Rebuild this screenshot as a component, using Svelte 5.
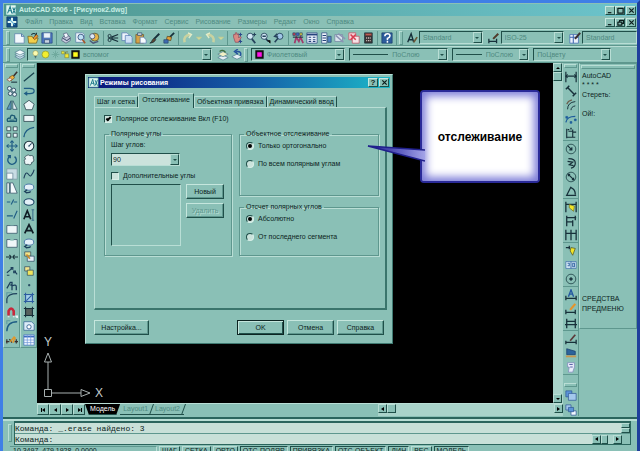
<script lang="ts">
    type Item = string;

    // every glyph is drawn on a 14x14 grid
    const line = (d: string, c = "#17303a", w = 1.2) =>
        `<path d="${d}" fill="none" stroke="${c}" stroke-width="${w}"/>`;
    const fill = (d: string, c: string, s = "#2c4a6c") =>
        `<path d="${d}" fill="${c}" stroke="${s}" stroke-width=".8"/>`;

    const icons: Record<string, string> = {
        app: fill("M1 1h12v12H1z", "#dff6f0", "#2f8c88") + line("M3 11L6 3l2 8M4 8h4M9 4l3 7M12 4L9 11", "#1c7a8a"),
        doc: fill("M1 1h12v12H1z", "#124f86", "#0b3560") + line("M7 2v10M2 7h10", "#dff6f0", 2.4) + line("M4 4l6 6", "#5fb0d8"),
        new: fill("M2 2h8l3 3v8H2z", "#f2f8fc", "#5379a6") + line("M10 2v3h3", "#5379a6"),
        open: fill("M1 5h5l1 2h6l-2 6H2z", "#f2cf4c", "#6b5a1c") + line("M5 3q4-3 6 1l-2 0M11 4V1", "#17303a") + fill("M7 7l4-4 2 2-4 4z", "#e8922c", "#7a4a1c"),
        save: fill("M1 1h12v12H1z", "#4e78c4", "#24427c") + fill("M3 1h8v6H3z", "#eaf2fa", "#5379a6") + fill("M4 9h6v4H4z", "#c9d4e2"),
        plot: fill("M3 6l5-3 4 3v4l-5 3-5-3z", "#c9cfe0", "#4c5878") + fill("M4 2l4-1 2 4-4 2z", "#f4f8ff", "#4c5878") + line("M3 7l5 3 4-3", "#4c5878"),
        preview: fill("M2 1h8l2 2v9H2z", "#eef4fb", "#5379a6") + '<circle cx="8" cy="6" r="3.4" fill="#bfe0f4" stroke="#33507c"/>' + line("M10 9l3 4", "#a35a2c", 2),
        publish: '<circle cx="8" cy="6" r="4.6" fill="#e6b448" stroke="#5b5b3a"/>' + '<circle cx="5" cy="5" r="3" fill="#dfe8f4" stroke="#4c5878"/>' + line("M2 10l4 3 6-2", "#4c5878", 1.6),
        cut: line("M1 7h12M5 6l8-3M5 8l8 3", "#17303a", 1.3) + '<circle cx="3" cy="4.6" r="1.8" fill="none" stroke="#17303a"/><circle cx="3" cy="9.4" r="1.8" fill="none" stroke="#17303a"/>',
        copy: fill("M1 1h6l2 2v7H1z", "#eef4fb", "#4d74b0") + fill("M5 4h6l2 2v7H5z", "#cfe0f6", "#4d74b0"),
        paste: fill("M1 3h9v10H1z", "#d7a348", "#6d5426") + fill("M3 1h5v3H3z", "#cdd4dc") + fill("M6 6h4l3 3v4H6z", "#f6fafd", "#4d74b0"),
        brush: line("M12 2L6 8", "#17303a", 2.2) + fill("M6 7l2 2q-2 4-7 4 2-1 3-4z", "#5b4632", "#17303a"),
        block: line("M8 6l5-5", "#17303a", 2) + fill("M5 5l5 1-1 4-5-1z", "#e4a13a", "#503a16") + fill("M1 9h5v4H1z", "#3f6cb2"),
        undo: line("M3 12q-2-8 7-9", "#c9d2a0", 3) + line("M7 1l4 2-3 4", "#e4ecc8", 1.6),
        redo: line("M11 12q2-8-7-9", "#c9d2a0", 3) + line("M7 1L3 3l3 4", "#e4ecc8", 1.6),
        more: fill("M4 6h6l-3 3z", "#d4dc9c", "#c4cc8c"),
        pan: fill("M3 6V3l2 0 0-2 2 0 0 2 2-1v5l2-2 1 1-3 6H5z", "#d98a84", "#8c4a5a") + line("M11 1v4M9 3h4M11 9v4M9 11h4", "#2c4a8c"),
        zoom: '<circle cx="6" cy="5" r="3.6" fill="#cfe6f2" stroke="#26435c"/>' + line("M8 8l4 5", "#26435c", 2) + line("M11 1v4M9 3h4", "#26435c"),
        zoomwin: '<circle cx="6" cy="5" r="3.6" fill="#cfe6f2" stroke="#26435c"/>' + line("M4 5h4M8 8l3 3", "#26435c", 1.8) + fill("M10 10h3v3z", "#111", "#111"),
        zoomprev: '<circle cx="8" cy="5" r="3.6" fill="#9fc6e6" stroke="#26435c"/>' + line("M6 7l-4 5M5 2L2 5l4 1", "#26435c", 1.8),
        props: fill("M1 1h3v3H1z", "#c83c4c") + fill("M5 1h3v3H5z", "#3c64c8") + fill("M9 1h3v3H9z", "#d8c83c") + line("M3 13L5 6l3 5 2-5 3 7", "#a33a6c", 2) + line("M1 6h12", "#17303a"),
        center: fill("M1 1h12v12H1z", "#e6eefa", "#26437c") + line("M1 3h12", "#26437c", 2) + line("M3 6h3M8 6h3M3 9h3M8 9h3M3 11h3M8 11h3", "#26437c"),
        palette: fill("M2 1h6v12H2z", "#eef4fb", "#26437c") + line("M3 4h4M3 7h4M3 10h4", "#26437c") + fill("M9 5h4v7H9z", "#5384c4"),
        sheet: fill("M1 3h9v8H1z", "#dbe6ee", "#6c7c9c") + line("M2 4l9 8M5 2l8 6", "#8c94b4", 1.8),
        markup: fill("M1 1h8v8H1z", "#f4d4dc", "#c8465c") + fill("M5 5h8v8H5z", "#f6e4e8", "#c8465c") + line("M3 3l6 6M9 3L3 9", "#d83c50", 1.8),
        calc: fill("M3 1h9v12H3z", "#3a3434", "#17303a") + fill("M4 2h7v2H4z", "#c86c5c", "#7a3a3a") + line("M5 7h1M7 7h1M9 7h1M5 10h1M7 10h1M9 10h1", "#e8d8d8", 1.6),
        help: fill("M1 1h12v12H1z", "#2c5c9c", "#173a68") + line("M4.500 5q0-3 3-3 3 0 3 2.500 0 2-3 3v2M7.500 10.500v2", "#fff", 1.8),
        textstyle: line("M2 12L6 2l3 10M3 9h5", "#17303a", 1.6) + line("M13 6l-4 6", "#6b5a3a", 2),
        dimstyle: line("M1 8v5M1 11h9M10 8v5", "#17303a", 1.5) + line("M12 2L6 8", "#503a2a", 2.4),
        tabstyle: fill("M1 3h10v10H1z", "#eaf0fa", "#3c64b0") + line("M1 6h10M5 3v10", "#3c64b0") + line("M13 1L7 8", "#3a3030", 2.4),
        layers: fill("M1 9l6-3 6 3-6 3z", "#c4dce8", "#517c90") + fill("M1 6.500l6-3 6 3-6 3z", "#dcecf4", "#517c90") + fill("M1 4l6-3 6 3-6 3z", "#f2fafc", "#517c90"),
        bulb: '<circle cx="7" cy="5" r="4" fill="#fdfbb0" stroke="#98984c" stroke-width=".8"/>' + line("M5.500 10h3M6 12h2", "#3c5c5c", 1.4),
        sun: '<circle cx="7" cy="7" r="5.400" fill="#f2ee30" stroke="#86902c"/>',
        freeze: line("M3 3l8 8M11 3l-8 8M7 1v12M1 7h12", "#6ea89c", 1.4),
        lock: fill("M1 2h4v4H1z", "#f4f03c", "#76762a") + fill("M6 6h6v6H6z", "#f2e834", "#76762a") + line("M7 6V3h4", "#76762a"),
        yellow: line("M2 2h10v10H2z", "#111", 3) + fill("M3 3h8v8H3z", "#fffb1e", "#111"),
        magenta: line("M2 2h10v10H2z", "#111", 3) + fill("M3 3h8v8H3z", "#ff12e8", "#111"),
        layerprev: fill("M1 10l6-3 6 3-6 3z", "#e4eef4", "#517c90") + fill("M1 6l6-3 6 3-6 3z", "#f2f0c4", "#517c90") + line("M3 3q4-3 7 1", "#3c6c3c", 1.4),
        layerback: fill("M1 9l6-3 6 3-6 3z", "#e4eef4", "#517c90") + line("M11 8q2-6-5-5M8 0L4 3l4 3", "#24509c", 1.6),
        erase: line("M13 1L8 7", "#3a3030", 1.8) + fill("M4 7l4-2 2 3-4 3z", "#f0b43c", "#785020") + fill("M1 10l4-2 2 2-3 2z", "#f4f0e4", "#8c4a3c") + line("M6 13h7", "#17303a"),
        copyobj: [[4, 4], [9, 6], [5, 10], [10, 11]].map(([x, y]) => `<circle cx="${x}" cy="${y}" r="2.300" fill="#e6f2f6" stroke="#26435c"/>`).join(""),
        mirror: fill("M6 2v10H1z", "#5e9cc0", "#1e4058") + fill("M8 2v10h5z", "#e6f2f6", "#1e4058"),
        offset: line("M2 11q-2-4 3-4 0-4 3-3 3 0 2 3 3 0 2 4z", "#1e5c74", 1.6) + line("M4 9.500h6", "#1e5c74", 1.2),
        array: fill("M1 1h4.500v4.500H1z", "#e6f2f6", "#17303a") + fill("M8.500 1H13v4.500H8.500z", "#e6f2f6", "#17303a") + fill("M1 8.500h4.500V13H1z", "#e6f2f6", "#17303a") + fill("M8.500 8.500H13V13H8.500z", "#e6f2f6", "#17303a"),
        move: line("M7 1v12M1 7h12", "#1e5c84", 1.4) + line("M5 3l2-2 2 2M5 11l2 2 2-2M3 5L1 7l2 2M11 5l2 2-2 2", "#1e5c84"),
        rotate: line("M5 2.500A5 5 0 1 0 10 3M2 2l3 0 0 3", "#1e5c84", 1.6),
        scale: fill("M1 1h12v12H1z", "#c8dce4", "#7c98a4") + fill("M1 6h7v7H1z", "#f4fafc", "#5c7c90"),
        stretch: fill("M1 1h3v12H1z", "#e6f2f6", "#26435c") + fill("M5 1l3 0 5 12H5z", "#f4fafc", "#26435c"),
        trim: line("M1 7h4M6 10l3-6M9 7h4", "#1e5c84", 1.3),
        extend: line("M1 8h7M9 11l4-9", "#1e5c84", 1.3),
        breakpt: fill("M1 3h12v9H1z", "#eef6f8", "#26435c") + line("M5 2h4", "#8ac0b6", 1.6),
        brk: fill("M1 3h12v9H1z", "#eef6f8", "#26435c") + line("M5 3h4", "#8ac0b6", 2.4),
        join: line("M0 7h5M9 7h5M4 4.500L6 7 4 9.500M10 4.500L8 7l2 2.500", "#17303a", 1.3),
        chamfer: line("M1 9l6-5M6 3h2v2H6zM10 7l3 4M9 7h2v2H9zM1 12h3", "#1e405c", 1.3),
        fillet: line("M1 11l4-7h2v3H5M7 13V8q5-2 5 1v4", "#1e405c", 1.5),
        arcin: line("M1 13V8q1-6 12-6", "#1e405c", 1.4) + line("M1 6V1h6", "#5c98a0"),
        magnet: line("M3 11V6q3-6 6 0v5", "#c8283c", 3) + line("M3 12v1M9 12v1M11 12h2v2", "#f0f4f8", 2),
        arcb: line("M1 13q0-11 12-11", "#1e5c84", 1.6) + line("M1 5V1h4", "#5c98a0"),
        explode: line("M0 9h4M4 6l3 4M10 9h4M12 6v5M1 6v5", "#3a3030", 1.4) + line("M5 9l5-6M8 10l3-6", "#e0982c", 1.8),
        line: line("M1 12L13 2", "#17404c", 1.4),
        pline: line("M1 4h7q5 0 5 3t-5 3H3M5 8L2 10l3 2", "#1e5c84", 1.4),
        polygon: fill("M7 1.500l6 4.500-2.300 6.500H3.300L1 6z", "#eef6f8", "#17303a"),
        rect: fill("M1 4h12v7H1z", "#eef6f8", "#17303a"),
        arc: line("M1 13Q2 3 13 1.500", "#1e5c84", 1.5),
        circle: '<circle cx="7" cy="7" r="5.600" fill="#eef6f8" stroke="#17303a" stroke-width="1.200"/>' + line("M7 7l3-3M6 7h2", "#1e405c"),
        cloud: fill("M3 6q-3-3 1-4 2-2 4 0 5-1 4 3 2 4-2 5 0 4-4 2-5 1-4-3-2-2 1-3z", "#eef6f8", "#17303a"),
        spline: line("M1 12q2-9 5-5t4 1q2-2 3-6", "#1e405c", 1.3),
        ellarc: '<ellipse cx="7" cy="6" rx="5.500" ry="3.600" fill="#e4f0f8" stroke="#3c6ca0"/>' + line("M3 12q4 1 6-1M5 9l-3 2 3 2", "#1e405c", 1.5),
        ellipse: '<ellipse cx="7" cy="7" rx="5.800" ry="3.800" fill="#e4f0f8" stroke="#1e4868" stroke-width="1.300"/>',
        insert: fill("M2 1h7v5H2z", "#f2e48c", "#26435c") + fill("M5 6h8v6H5z", "#e6eef8", "#26435c") + line("M4 4l4 5", "#c88c2c", 2),
        mkblock: fill("M2 2h6v5H2z", "#f2e48c", "#26435c") + fill("M5 6h7v6H5z", "#f0e45c", "#26435c"),
        mtext: line("M1 12L5 2l4 10M2.500 9h5", "#101c24", 1.9) + line("M10 1h3M10 13h3M11.500 1v12", "#3a6c8c"),
        bigA: line("M2 12L7 2l5 10M4 9h6", "#101c24", 2),
        point: fill("M6.500 6.500h1.500V8H6.500z", "#1e405c", "#1e405c"),
        hatch: fill("M3 3h8v8H3z", "#a4cfe8", "#2c5ca0") + line("M1 3h12M1 11h12M3 1v12M11 1v12M4 10l6-6", "#2c5ca0"),
        gradient: fill("M3 3h8v8H3z", "#56605c", "#17303a") + line("M1 3h12M1 11h12M3 1v12M11 1v12", "#17303a"),
        region: fill("M1 2h9l3 3v7H1z", "#dcecf8", "#2c5c90") + '<circle cx="7" cy="8" r="2.500" fill="#fff" stroke="#2c5c90"/>',
        table: fill("M1 1h12v12H1z", "#f2f8ff", "#3c6cc0") + line("M1 3h12", "#3c6cc0", 2) + line("M5 1v12M9 1v12M1 7h12M1 10h12", "#6c94d8", .8),
        dlin: line("M1 1v12M13 1v12M1 6h12", "#17303a", 1.4) + line("M3 4L1 6l2 2M11 4l2 2-2 2", "#17303a"),
        dali: line("M3 3l8 8M1 5l4-4M9 13l4-4", "#17303a", 1.7),
        darc: line("M3 12q0-8 9-9M7 13q0-4 5-5", "#17303a", 1.1) + line("M2 6l2-3 4-2", "#6c5c4c", 1.4),
        dord: line("M1 11q1-7 11-7", "#1e5c9c", 1.5) + fill("M1 4h2v2H1zM6 10h2v2H6zM11 7h2v2h-2z", "#1e5c9c", "#1e5c9c"),
        djog: line("M2 2v11M2 12h10M4 5h5v7M9 3v3h4", "#17303a", 1.3) + line("M3 3h2M7 1v2", "#17303a", 1.6),
        drad: '<circle cx="7" cy="7" r="5.600" fill="none" stroke="#24484c"/>' + line("M3 3l5 5M8 5v3H5", "#17303a", 1.3),
        djogr: line("M4 2q8 0 8 5t-5 6M3 5l6 1-4 3 5 1", "#17303a", 1.4),
        ddia: '<circle cx="7" cy="7" r="5.600" fill="none" stroke="#24484c"/>' + line("M3 3l8 8M4 6V4h2M10 8v2H8", "#17303a", 1.4),
        dang: line("M7 2L2 12h11M7 3q5 2 5 8", "#17303a", 1.5),
        dquick: line("M1 1v12M13 1v12M1 4h12", "#17303a", 1.5) + fill("M5 4l6 2-1 6-5-4z", "#f0e428", "#6c6c1c"),
        dbase: line("M2 1v12M2 3h11M2 8h7M9 6v7M12 1v5", "#17303a", 1.5),
        dcont: line("M1 1v12M7 1v12M13 1v12M1 5h12", "#17303a", 1.5),
        dlead: line("M1 3h5M5 1v4", "#17303a", 1.4) + fill("M7 3l5 1-3 8-3-5z", "#f0e428", "#4c4c1c"),
        dtol: fill("M1 3h12v8H1z", "#d4e8f4", "#3c6ca8") + line("M7 3v8M3 5h2v3H3M9 5h2v4H9z", "#3c6ca8"),
        dcen: '<circle cx="7" cy="7" r="5.600" fill="none" stroke="#24484c"/>' + line("M7 5v4M5 7h4", "#17303a", 1.6),
        dtxt: line("M1 8v5M13 8v5M1 11h12", "#17303a", 1.5) + line("M4 9l3-8 3 8M5 6h4", "#2458a0", 1.6),
        dpen: line("M1 8v5M12 8v5M1 11h11", "#17303a", 1.5) + line("M12 1L6 8", "#e4942c", 2.6),
        dupd: line("M2 2v11M12 2v11M2 5h10M0 9h14", "#17303a", 1.5),
        dred: line("M1 9v4M13 8v5M1 11h12", "#17303a", 1.5) + line("M12 2L6 9", "#5c3a3a", 2),
        dblu: fill("M2 2l10 3v4H2z", "#2c649c", "#173a68") + line("M1 11h12", "#c89850", 2),
        dscr: fill("M3 2h8v5l-2 6H4l1-6H3z", "#e8ecfa", "#7c84b8") + line("M5 4h4M6 7h3", "#5c64a8"),
        ord1: fill("M1 1h7v7H1z", "#5c94d8", "#2c5494") + fill("M4 4h9v8H4z", "#a4c8ec", "#2c5494"),
        ord2: fill("M1 1h6v6H1z", "#a4c8ec", "#2c5494") + fill("M7 8h6v5H7z", "#f2f8ff", "#2c5494") + fill("M4 4h6v5H4z", "#5c94d8", "#2c5494"),
    };

    const maximize = "M1 1.500h6M1 1v6h6V1";
    const restore = "M3 1.500h4.500M3 1v2M7.500 1v4H6M1 3.500h4.500M1 3v4h4.500V3";

    const menu = ["Файл", "Правка", "Вид", "Вставка", "Формат", "Сервис", "Рисование", "Размеры", "Редакт", "Окно", "Справка"];
    const standard: Item[][] = [
        ["new", "open", "save"],
        ["plot", "preview", "publish"],
        ["cut", "copy", "paste", "brush", "block"],
        ["undo", "more", "redo", "more"],
        ["pan", "zoom", "zoomwin", "zoomprev"],
        ["props", "center", "palette", "sheet", "markup", "calc"],
        ["help"],
    ];
    const modify: Item[] = ["erase", "copyobj", "mirror", "offset", "array", "move", "rotate", "scale", "stretch", "trim", "extend", "breakpt", "brk", "join", "chamfer", "fillet", "arcin", "magnet", "arcb", "explode"];
    const draw: Item[] = ["line", "pline", "polygon", "rect", "arc", "circle", "cloud", "spline", "ellarc", "ellipse", "mtext", "bigA", "ellarc", "insert", "mkblock", "point", "hatch", "gradient", "region", "table"];
    const dims: Item[][] = [
        ["dlin", "dali", "darc", "dord", "djog"],
        ["drad", "djogr", "ddia", "dang"],
        ["dquick", "dbase", "dcont"],
        ["dlead", "dtol", "dcen"],
        ["dtxt", "dpen", "dupd"],
        ["dred", "dblu", "dscr"],
    ];
    const tabs = ["Шаг и сетка", "Отслеживание", "Объектная привязка", "Динамический ввод"];

    let active = $state(1);
    let polar = $state(true);
    let extra = $state(false);
    let tracking = $state("ortho");
    let measure = $state("abs");
    let command = $state("");
</script>

{#snippet icon(name: string)}
    <svg class="icon" viewBox="0 0 14 14" aria-hidden="true">{@html icons[name]}</svg>
{/snippet}

{#snippet combo(cls: string, label: string, value: string, lead: string[])}
    <div class="combo {cls}">
        {#each lead as name}
            {#if name === "rule"}
                <span class="rule"></span>
            {:else}
                {@render icon(name)}
            {/if}
        {/each}
        <select aria-label={label}><option>{value}</option></select>
        <span class="drop"></span>
    </div>
{/snippet}

{#snippet winButtons(middle: string)}
    <div class="winbtns">
        <button aria-label="Свернуть"><svg viewBox="0 0 8 8"><path d="M1 6.500h4" /></svg></button>
        <button aria-label="Развернуть"><svg viewBox="0 0 8 8"><path d={middle} /></svg></button>
        <button class="apart" aria-label="Закрыть"><svg viewBox="0 0 8 8"><path d="M1.500 1.500l5 5M6.500 1.500l-5 5" /></svg></button>
    </div>
{/snippet}

<div class="app">
    <header class="titlebar">
        {@render icon("app")}
        <h1>AutoCAD 2006 - [Рисунок2.dwg]</h1>
        {@render winButtons(maximize)}
    </header>

    <nav class="menubar">
        {@render icon("doc")}
        {#each menu as item}
            <button>{item}</button>
        {/each}
        {@render winButtons(restore)}
    </nav>

    <div class="toolbar">
        <span class="grip"></span>
        {#each standard as group}
            <div class="group">
                {#each group as name}
                    <button class="tool" class:slim={name === "more"} aria-label={name}>{@render icon(name)}</button>
                {/each}
            </div>
        {/each}
        <span class="grip"></span>
        <button class="tool" aria-label="textstyle">{@render icon("textstyle")}</button>
        {@render combo("w6", "Стиль текста", "Standard", [])}
        <button class="tool" aria-label="dimstyle">{@render icon("dimstyle")}</button>
        {@render combo("w6", "Размерный стиль", "ISO-25", [])}
        <button class="tool" aria-label="tabstyle">{@render icon("tabstyle")}</button>
        {@render combo("w5 open", "Стиль таблицы", "Standard", [])}
    </div>

    <div class="toolbar second">
        <span class="grip"></span>
        <button class="tool" aria-label="layers">{@render icon("layers")}</button>
        {@render combo("w19", "Слой", "вспомог", ["bulb", "sun", "freeze", "lock", "yellow"])}
        <button class="tool" aria-label="layerprev">{@render icon("layerprev")}</button>
        <button class="tool" aria-label="layerback">{@render icon("layerback")}</button>
        <span class="grip"></span>
        {@render combo("w9", "Цвет", "Фиолетовый", ["magenta"])}
        {@render combo("w10", "Тип линии", "ПоСлою", ["rule"])}
        {@render combo("w8", "Вес линии", "ПоСлою", ["rule"])}
        {@render combo("w8", "Стиль печати", "ПоЦвету", [])}
    </div>

    <main>
        <div class="column left">
            <span class="grip flat"></span>
            {#each modify as name}
                <button class="tool" aria-label={name}>{@render icon(name)}</button>
            {/each}
        </div>
        <div class="column left">
            <span class="grip flat"></span>
            {#each draw as name}
                <button class="tool" aria-label={name}>{@render icon(name)}</button>
            {/each}
        </div>

        <div class="drawing">
            <div class="canvasrow">
                <div class="canvas">
                    <svg class="ucs" viewBox="0 0 64 64">
                        <path d="M4.500 53.500h7v7h-7zM8 53.500V26M4.500 26L8 17l3.500 9zM11.500 57H41M41 53.500l9 3.500-9 3.500z" />
                        <text x="4" y="10">Y</text>
                        <text x="55" y="61">X</text>
                    </svg>
                </div>
                <div class="vscroll">
                    <button class="arrow up" aria-label="Вверх"></button>
                    <span class="thumb"></span>
                    <span class="space"></span>
                    <button class="arrow down" aria-label="Вниз"></button>
                </div>
            </div>
            <div class="sheets">
                <button class="arrow first" aria-label="Первый"></button>
                <button class="arrow prev" aria-label="Назад"></button>
                <button class="arrow next" aria-label="Вперед"></button>
                <button class="arrow last" aria-label="Последний"></button>
                <button class="sheet on">Модель</button>
                <button class="sheet">Layout1</button>
                <button class="sheet">Layout2</button>
                <span class="space"></span>
                <div class="hscroll">
                    <button class="arrow prev" aria-label="Влево"></button>
                    <span class="thumb"></span>
                    <span class="space"></span>
                    <button class="arrow next" aria-label="Вправо"></button>
                </div>
            </div>
        </div>

        <div class="column right">
            <span class="grip flat"></span>
            {#each dims as group}
                <div class="stack">
                    {#each group as name}
                        <button class="tool" aria-label={name}>{@render icon(name)}</button>
                    {/each}
                </div>
            {/each}
            <span class="grip flat lower"></span>
            <button class="tool" aria-label="ord1">{@render icon("ord1")}</button>
            <button class="tool" aria-label="ord2">{@render icon("ord2")}</button>
        </div>

        <aside class="screenmenu">
            <span class="grip flat"></span>
            <a href="#top">AutoCAD</a>
            <a href="#snap" class="stars">* * * *</a>
            <a href="#erase" class="gap">Стереть:</a>
            <a href="#oops" class="gap">Ой!:</a>
            <span class="space"></span>
            <a href="#tools">СРЕДСТВА</a>
            <a href="#last">ПРЕДМЕНЮ</a>
        </aside>

        <div class="dialog" role="dialog" aria-label="Режимы рисования">
            <div class="caption">
                {@render icon("app")}
                <h2>Режимы рисования</h2>
                <div class="winbtns">
                    <button aria-label="Подсказка"><b>?</b></button>
                    <button class="apart" aria-label="Закрыть"><svg viewBox="0 0 8 8"><path d="M1.500 1.500l5 5M6.500 1.500l-5 5" /></svg></button>
                </div>
            </div>
            <div class="tabs">
                {#each tabs as tab, i}
                    <button class="tab" class:active={i === active} onclick={() => (active = i)}>{tab}</button>
                {/each}
            </div>
            <div class="page">
                <label class="row"><input type="checkbox" bind:checked={polar} />Полярное отслеживание Вкл (F10)</label>
                <div class="columns">
                    <fieldset class="angles">
                        <legend>Полярные углы</legend>
                        <label for="step">Шаг углов:</label>
                        <div class="combo angle">
                            <select id="step"><option>90</option></select>
                            <span class="drop"></span>
                        </div>
                        <label class="row"><input type="checkbox" bind:checked={extra} />Дополнительные углы</label>
                        <div class="list">
                            <div class="listbox" role="listbox" aria-label="Дополнительные углы" tabindex="0"></div>
                            <div class="side">
                                <button class="btn">Новый</button>
                                <button class="btn" disabled>Удалить</button>
                            </div>
                        </div>
                    </fieldset>
                    <div class="choices">
                        <fieldset class="tall">
                            <legend>Объектное отслеживание</legend>
                            <label class="row"><input type="radio" value="ortho" bind:group={tracking} />Только ортогонально</label>
                            <label class="row"><input type="radio" value="all" bind:group={tracking} />По всем полярным углам</label>
                        </fieldset>
                        <fieldset>
                            <legend>Отсчет полярных углов</legend>
                            <label class="row"><input type="radio" value="abs" bind:group={measure} />Абсолютно</label>
                            <label class="row"><input type="radio" value="rel" bind:group={measure} />От последнего сегмента</label>
                        </fieldset>
                    </div>
                </div>
            </div>
            <div class="actions">
                <button class="btn wide">Настройка...</button>
                <span class="space"></span>
                <button class="btn default">OK</button>
                <button class="btn">Отмена</button>
                <button class="btn">Справка</button>
            </div>
        </div>

        <div class="callout">
            <svg class="tail" viewBox="0 0 58 18">
                <defs>
                    <linearGradient id="tail" x1="0" x2="1">
                        <stop offset="0" stop-color="#1c1c8c" />
                        <stop offset=".6" stop-color="#6464c4" />
                        <stop offset="1" stop-color="#a4a4e8" />
                    </linearGradient>
                </defs>
                <path d="M58 5L1 1l57 15" fill="url(#tail)" stroke="#20208c" stroke-width="1.500" />
            </svg>
            отслеживание
        </div>
    </main>

    <section class="command">
        <span class="grip"></span>
        <div class="lines">
            <div class="history">
                <output>Команда: _.erase найдено: 3</output>
                <div class="spin"><span></span><span></span></div>
            </div>
            <div class="prompt">
                <label for="cmd">Команда:</label>
                <input id="cmd" type="text" bind:value={command} />
                <div class="hscroll mini">
                    <button class="arrow prev" aria-label="Влево"></button>
                    <span class="thumb"></span>
                    <span class="space"></span>
                    <button class="arrow next" aria-label="Вправо"></button>
                </div>
            </div>
        </div>
    </section>

    <footer>
        <span class="coords">10.3497, 479.1928, 0.0000</span>
        <button>ШАГ</button>
        <button>СЕТКА</button>
        <button>ОРТО</button>
        <button class="in">ОТС-ПОЛЯР</button>
        <button class="in">ПРИВЯЗКА</button>
        <button class="in">ОТС-ОБЪЕКТ</button>
        <button class="in">ДИН</button>
        <button>ВЕС</button>
        <button class="in">МОДЕЛЬ</button>
    </footer>
</div>

<style>
    :global(body) {
        background: #8ac0b6;
    }

    .app {
        --face: #8ac0b6;
        --light: #b9ded5;
        --dark: #1f4f49;
        --mid: #5e978e;
        --dim: #4f8a81;
        height: 100vh;
        display: flex;
        flex-direction: column;
        overflow: hidden;
        box-sizing: border-box;
        border: 3px solid #3f7fe6;
        border-right-color: #1f3f9c;
        border-bottom: 0;
        background: var(--face);
        color: #0c2422;
        font-family: "Liberation Sans", Arial, sans-serif;
        font-size: 7px;
        line-height: 10px;
        white-space: nowrap;
    }

    button,
    select,
    input {
        font: inherit;
        color: inherit;
        margin: 0;
        padding: 0;
        border: 0;
        background: none;
        border-radius: 0;
    }

    h1,
    h2 {
        margin: 0;
        flex: 1;
        font-size: 7px;
    }

    .icon {
        width: 12px;
        height: 12px;
        flex: none;
        display: block;
    }

    .space {
        flex: 1;
    }

    .titlebar {
        display: flex;
        align-items: center;
        gap: 2px;
        height: 12px;
        flex: none;
        margin: 1px 0 0 1px;
        padding: 0 1px;
        background: linear-gradient(90deg, #4f968e, #6cc4cc);
        color: #c8eee6;
    }

    .menubar {
        display: flex;
        align-items: center;
        gap: 7px;
        height: 12px;
        flex: none;
        padding: 0 1px 0 3px;
        color: var(--dim);
        border-bottom: 1px solid var(--mid);
    }

    .winbtns {
        display: flex;
        margin-left: auto;
    }

    .winbtns button {
        width: 10px;
        height: 9px;
        box-sizing: border-box;
        border: 1px solid;
        border-color: #c9e8e0 var(--dark) var(--dark) #c9e8e0;
        background: var(--face);
        display: flex;
        align-items: center;
        justify-content: center;
        font-size: 8px;
        line-height: 7px;
        color: #0c1c1c;
    }

    .winbtns .apart {
        margin-left: 1px;
    }

    .winbtns svg {
        width: 7px;
        height: 7px;
        fill: none;
        stroke: #0c1c1c;
        stroke-width: 1.4;
    }

    .toolbar {
        display: flex;
        align-items: center;
        height: 17px;
        flex: none;
        padding-left: 3px;
        border-top: 1px solid var(--light);
        border-bottom: 1px solid var(--mid);
        box-sizing: border-box;
    }

    .second {
        padding-right: 22px;
    }

    .second .grip {
        margin-right: 3px;
    }

    .grip {
        width: 2px;
        height: 12px;
        flex: none;
        margin-right: 2px;
        border: 1px solid;
        border-color: var(--light) var(--mid) var(--mid) var(--light);
    }

    .grip.flat {
        width: auto;
        height: 2px;
        margin: 1px 1px 2px;
    }

    .grip.lower {
        margin-top: 7px;
    }

    .group {
        display: flex;
        padding-right: 2px;
        margin-right: 2px;
        border-right: 1px solid var(--mid);
    }

    .tool {
        width: 14px;
        height: 14px;
        flex: none;
        display: flex;
        align-items: center;
        justify-content: center;
    }

    .tool.slim {
        width: 8px;
    }

    .combo {
        display: flex;
        align-items: center;
        gap: 1px;
        height: 13px;
        box-sizing: border-box;
        min-width: 0;
        padding-left: 3px;
        margin-right: 4px;
        border: 1px solid;
        border-color: var(--dark) var(--light) var(--light) var(--dark);
        color: var(--dim);
    }

    .combo .icon {
        width: 9px;
        height: 9px;
    }

    .combo .icon + select {
        padding-left: 2px;
    }

    .w5 { flex: 52 1 0; }
    .w6 { flex: 61 1 0; }
    .w8 { flex: 76 1 0; }
    .w9 { flex: 93 1 0; }
    .w10 { flex: 98 1 0; }
    .w19 { flex: 188 1 0; }

    .open {
        margin-right: 0;
    }

    .open .drop {
        display: none;
    }

    .rule {
        flex: 4;
        height: 1px;
        background: var(--dark);
    }

    select {
        appearance: none;
        flex: 5;
        min-width: 0;
        outline: 0;
    }

    .rule + select {
        padding-left: 3px;
    }

    .drop {
        width: 7px;
        align-self: stretch;
        flex: none;
        border: 1px solid;
        border-color: var(--light) var(--dark) var(--dark) var(--light);
        display: flex;
        align-items: center;
        justify-content: center;
        pointer-events: none;
    }

    .drop::before {
        content: "";
        border: 2px solid transparent;
        border-top-color: #1f4f49;
        border-bottom: 0;
    }

    main {
        position: relative;
        flex: 1;
        min-height: 0;
        display: flex;
    }

    .column {
        width: 15px;
        flex: none;
        display: flex;
        flex-direction: column;
        border-right: 1px solid var(--mid);
    }

    .left {
        height: 284px;
        border-left: 1px solid var(--light);
        border-bottom: 1px solid var(--mid);
    }

    .left .tool {
        flex: 1;
        width: 100%;
        min-height: 0;
    }

    .right .tool {
        width: 15px;
        height: 14px;
    }

    .stack {
        margin-bottom: 1px;
        border-bottom: 1px solid var(--mid);
    }

    .drawing {
        flex: 1;
        min-width: 0;
        display: flex;
        flex-direction: column;
    }

    .canvasrow {
        flex: 1;
        min-height: 0;
        display: flex;
    }

    .canvas {
        flex: 1;
        background: #000;
        position: relative;
    }

    .ucs {
        position: absolute;
        left: 3px;
        bottom: 3px;
        width: 64px;
        height: 64px;
        fill: none;
        stroke: #a8b0b0;
    }

    .ucs text {
        fill: #c4cccc;
        stroke: none;
        font-size: 12px;
    }

    .vscroll {
        width: 10px;
        display: flex;
        flex-direction: column;
        background: #a9d3ca;
    }

    .thumb {
        width: 7px;
        height: 7px;
        border: 1px solid;
        border-color: var(--light) var(--dark) var(--dark) var(--light);
        background: var(--face);
    }

    .arrow {
        width: 9px;
        height: 9px;
        flex: none;
        box-sizing: border-box;
        border: 1px solid;
        border-color: var(--light) var(--dark) var(--dark) var(--light);
        background: var(--face);
        display: flex;
        align-items: center;
        justify-content: center;
    }

    .arrow::before {
        content: "";
        border: 2px solid transparent;
    }

    .up::before {
        border-bottom-color: #000;
        border-top: 0;
    }

    .down::before {
        border-top-color: #000;
        border-bottom: 0;
    }

    .prev::before,
    .first::before {
        border-right: 3px solid #000;
        border-left: 0;
    }

    .next::before,
    .last::before {
        border-left: 3px solid #000;
        border-right: 0;
    }

    .first::before {
        box-shadow: -1px 0 #000;
    }

    .last::before {
        box-shadow: 1px 0 #000;
    }

    .sheets {
        display: flex;
        height: 12px;
        flex: none;
        border-top: 1px solid var(--light);
    }

    .sheets > .arrow {
        width: 12px;
        height: 11px;
    }

    .sheet {
        position: relative;
        height: 11px;
        padding: 0 4px 0 3px;
        color: var(--dim);
        border-bottom: 1px solid var(--dark);
    }

    .sheet::after {
        content: "";
        position: absolute;
        top: 0;
        right: 0;
        height: 11px;
        border-right: 1px solid var(--dark);
        transform: skewX(-20deg);
    }

    .sheet.on {
        background: #000;
        color: #fff;
        clip-path: polygon(0 0, 100% 0, calc(100% - 4px) 100%, 4px 100%);
        padding: 0 5px;
    }

    .hscroll {
        display: flex;
        width: 185px;
        background: #a9d3ca;
    }

    .mini {
        width: 30px;
        margin-right: 8px;
    }

    .mini .thumb {
        width: 5px;
    }

    .screenmenu {
        flex: none;
        width: 58px;
        height: 266px;
        display: flex;
        flex-direction: column;
        border: 1px solid var(--mid);
        border-left-color: var(--light);
        box-sizing: border-box;
    }

    .screenmenu a {
        padding-left: 2px;
        color: inherit;
        text-decoration: none;
    }

    .screenmenu .stars {
        line-height: 8px;
    }

    .screenmenu .gap {
        margin-top: 1px;
        margin-bottom: 8px;
    }

    .screenmenu a:last-child {
        margin-bottom: 14px;
    }

    .dialog {
        position: absolute;
        left: 82px;
        top: 11px;
        width: 308px;
        box-sizing: border-box;
        padding: 2px;
        border: 1px solid;
        border-color: var(--light) #3f7a72 #3f7a72 var(--light);
        background: var(--face);
    }

    .caption {
        display: flex;
        align-items: center;
        gap: 1px;
        height: 11px;
        padding: 0 1px 0 0;
        background: linear-gradient(90deg, #0a1478, #1560a8 55%, #1cb8c8);
        color: #fff;
    }

    .caption .icon {
        width: 11px;
        height: 11px;
    }

    .tabs {
        display: flex;
        align-items: flex-end;
        height: 19px;
        padding-left: 6px;
    }

    .tab {
        height: 11px;
        padding: 0 2px;
        border-top: 1px solid var(--light);
        border-left: 1px solid var(--light);
        border-right: 1px solid var(--dark);
    }

    .tab.active {
        height: 15px;
        margin-bottom: -1px;
        padding: 0 3px 3px;
        background: var(--face);
    }

    .page {
        height: 203px;
        box-sizing: border-box;
        margin: 0 3px 0 6px;
        padding: 6px 6px 0 9px;
        border: 1px solid var(--light);
        border-right: 2px solid #3a756c;
        border-bottom: 2px solid #3a756c;
    }

    .row {
        display: flex;
        align-items: center;
        gap: 4px;
    }

    input[type="checkbox"],
    input[type="radio"] {
        appearance: none;
        width: 8px;
        height: 8px;
        flex: none;
        box-sizing: border-box;
        border: 1px solid;
        border-color: var(--dark) #d8efe8 #d8efe8 var(--dark);
        background: #cbe3dc;
        display: flex;
        align-items: center;
        justify-content: center;
    }

    input[type="radio"] {
        border-radius: 50%;
    }

    input[type="radio"]:checked::before {
        content: "";
        width: 4px;
        height: 4px;
        border-radius: 50%;
        background: #000;
    }

    input[type="checkbox"]:checked::before {
        content: "";
        width: 3px;
        height: 1px;
        margin-bottom: 2px;
        border-left: 2px solid #000;
        border-bottom: 2px solid #000;
        transform: rotate(-45deg);
    }

    .columns {
        display: flex;
        gap: 7px;
        margin-top: 5px;
    }

    fieldset {
        min-width: 0;
        margin: 0;
        padding: 1px 6px 0;
        border: 1px solid var(--mid);
        box-shadow: inset 1px 1px var(--light), 1px 1px var(--light);
    }

    legend {
        padding: 0 2px;
        margin-left: -2px;
    }

    .angles {
        width: 128px;
        height: 127px;
        box-sizing: border-box;
    }

    .angle {
        width: 69px;
        height: 13px;
        margin: 3px 0 5px;
        padding-left: 1px;
        background: #cbe3dc;
        color: #0c2422;
    }

    .angle .drop {
        background: var(--face);
    }

    .list {
        display: flex;
        gap: 5px;
        margin-top: 3px;
    }

    .listbox {
        width: 70px;
        height: 62px;
        box-sizing: border-box;
        border: 1px solid;
        border-color: var(--dark) var(--light) var(--light) var(--dark);
    }

    .side {
        display: flex;
        flex-direction: column;
        gap: 4px;
    }

    .btn {
        min-width: 38px;
        height: 15px;
        box-sizing: border-box;
        border: 1px solid;
        border-color: #c5e6dd var(--dark) var(--dark) #c5e6dd;
        box-shadow: inset -1px -1px var(--mid);
    }

    .btn:disabled {
        color: var(--mid);
        text-shadow: 1px 1px var(--light);
    }

    .choices {
        flex: 1;
        display: flex;
        flex-direction: column;
        gap: 6px;
    }

    .choices fieldset {
        height: 54px;
        box-sizing: border-box;
    }

    .choices .tall {
        height: 67px;
    }

    .choices .row {
        margin-top: 1px;
    }

    .choices .row + .row {
        margin-top: 8px;
    }

    .actions {
        display: flex;
        gap: 3px;
        padding: 10px 6px 6px;
    }

    .actions .btn {
        width: 47px;
    }

    .actions .wide {
        width: 55px;
    }

    .actions .default {
        border: 1px solid #0c2422;
        box-shadow: inset 1px 1px #c5e6dd, inset -1px -1px var(--dark);
    }

    .callout {
        position: absolute;
        left: 417px;
        top: 27px;
        width: 120px;
        height: 93px;
        box-sizing: border-box;
        display: flex;
        align-items: center;
        justify-content: center;
        border: 2px solid #2a2a98;
        border-radius: 4px;
        background: #fff;
        box-shadow: inset 0 0 9px 4px #7c7cd8;
        color: #000;
        font-size: 12px;
        font-weight: bold;
    }

    .tail {
        position: absolute;
        left: -55px;
        top: 53px;
        width: 58px;
        height: 18px;
    }

    .command {
        flex: none;
        display: flex;
        align-items: center;
        margin-top: 1px;
        padding: 1px 6px 0 5px;
        border-top: 2px solid #2b655d;
        box-shadow: inset 0 2px var(--light);
        font: 8px "Liberation Mono", monospace;
    }

    .command .grip {
        height: 16px;
    }

    .lines {
        flex: 1;
        min-width: 0;
        border: 1px solid #2b655d;
        border-top-width: 2px;
        margin-top: 1px;
    }

    .history,
    .prompt {
        display: flex;
        align-items: center;
        height: 10px;
        background: #c8e0d8;
    }

    .history {
        border-bottom: 1px solid var(--mid);
    }

    .prompt {
        background: linear-gradient(90deg, #c8e0d8 calc(100% - 38px), var(--face) 0);
    }

    output {
        flex: 1;
    }

    .prompt input {
        flex: 1;
        min-width: 0;
        height: 9px;
        outline: 0;
    }

    .spin {
        width: 9px;
        align-self: stretch;
        display: flex;
        flex-direction: column;
    }

    .spin span {
        flex: 1;
        border: 1px solid;
        border-color: var(--light) var(--dark) var(--dark) var(--light);
        background: var(--face);
    }

    footer {
        flex: none;
        height: 5px;
        margin-top: 1px;
        overflow: hidden;
        display: flex;
        align-items: flex-start;
        gap: 2px;
        padding-left: 7px;
        line-height: 8px;
    }

    footer .coords {
        width: 143px;
        padding-left: 3px;
        border-top: 1px solid var(--mid);
        border-right: 1px solid var(--light);
    }

    footer button {
        padding: 0 2px;
        border: 1px solid;
        border-color: var(--light) var(--dark) var(--dark) var(--light);
        line-height: 8px;
    }

    footer .in {
        border-color: var(--dark) var(--light) var(--light) var(--dark);
    }
</style>
